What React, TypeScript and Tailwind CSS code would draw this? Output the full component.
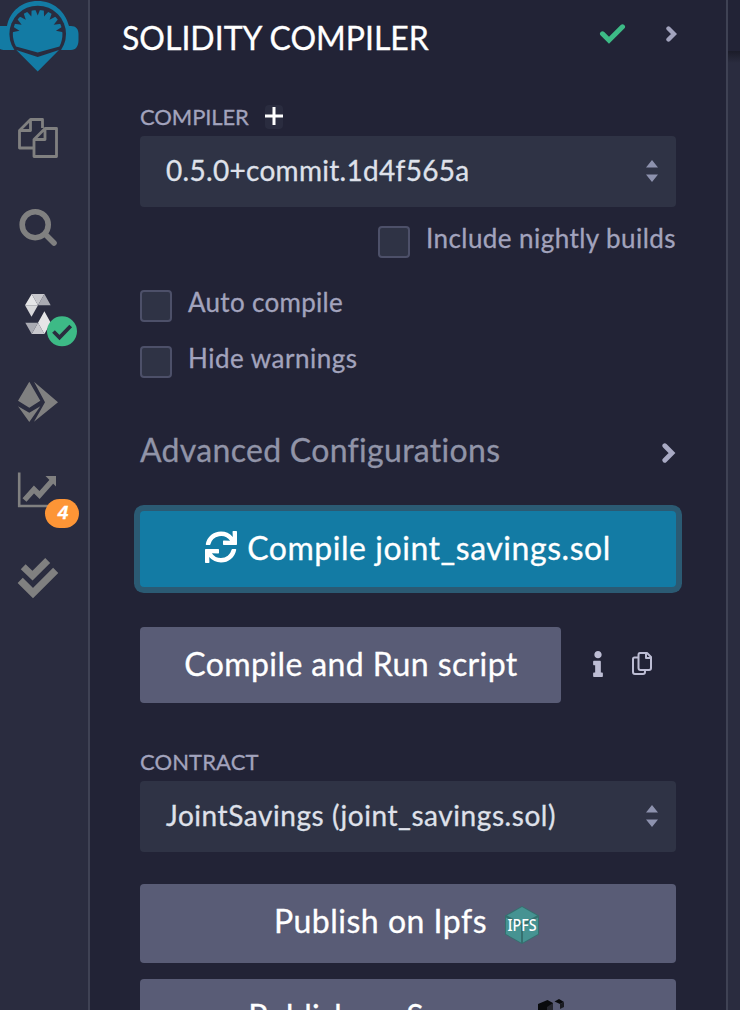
import type { ReactNode } from "react";
import { FaSync, FaInfo } from "react-icons/fa";

function Logo() {
  const teeth = [-80, -60, -40, -20, 0, 20, 40, 60, 80];
  return (
    <svg className="block h-[72px] w-[88px]" viewBox="0 0 88 72">
      <path fill="#137ba4" d="M-2 26H7C10 11 22 1 37.7 1S65 11 69 26H71C76 26 78.5 29 78.5 34V40C78.5 46 76 50 71 50H5C2 50 0 49 -2 48Z" />
      <circle cx="37.700" cy="34" r="28.300" fill="#2a2c3f" />
      <path fill="#137ba4" d="M16 46.500C7 29 18 10 37.700 10S68 29 59.500 46.500L37.700 52.500Z" />
      {teeth.map((a) => (
        <path key={a} fill="#2a2c3f" d="M34.900 8.500H40.500L37.700 15.500Z" transform={`rotate(${a} 37.7 34)`} />
      ))}
      <path fill="#137ba4" d="M16.300 50L37.700 57L59 50L37.700 71.500Z" />
    </svg>
  );
}

function NavItem({ children }: { children: ReactNode }) {
  return <div className="relative h-[88px] w-[88px]">{children}</div>;
}

function Sidebar() {
  return (
    <nav className="w-[90px] shrink-0 border-r-2 border-[#3f4254] bg-[#2a2c3f]">
      <div className="h-[94px]"><Logo /></div>
      <NavItem>
        <svg className="size-full" viewBox="0 94 88 88" fill="none" stroke="#808080" strokeWidth="2.800" strokeLinejoin="round">
          <path d="M33 148H19.500V130.500L30.500 119.500H42.500V128M30.500 119.500V130.500H19.500" />
          <path d="M34 156.500V139.500L45 128.500H56.500V156.500ZM45 128.500V139.500H34" />
        </svg>
      </NavItem>
      <NavItem>
        <svg className="size-full" viewBox="0 182 88 88" fill="none" stroke="#808080">
          <circle cx="35.200" cy="224.700" r="13" strokeWidth="5.600" />
          <path d="M45 234L54 243" strokeWidth="5.600" strokeLinecap="round" />
        </svg>
      </NavItem>
      <NavItem>
        <svg className="size-full" viewBox="0 270 88 88">
          <path fill="#e5e5e7" d="M31.700 294L38 305.300H25ZM44.400 311.300L50.700 322.700L44.400 334L38 322.700Z" />
          <path fill="#c8c8cd" d="M31.700 294H44.400L38 305.300ZM31.700 334H44.400L38 322.700Z" />
          <path fill="#a9aab2" d="M44.400 294L50.700 305.300H38ZM25.300 322.700H38L31.700 334Z" />
          <path fill="#d7d7da" d="M25 305.300H38L31.500 316.700Z" />
          <circle cx="62" cy="331.300" r="15" fill="#3dba86" />
          <path d="M53.500 331.500L59.500 337.500L70.700 326" fill="none" stroke="#2a2c3f" strokeWidth="3.800" />
        </svg>
      </NavItem>
      <NavItem>
        <svg className="size-full" viewBox="0 358 88 88" fill="#808080">
          <path d="M29.300 381.700L40.300 400.700L29.300 407.700L18 400.700ZM18 406.300L29.300 412.700L40.300 406.300L29.300 422ZM34 381.700L58 402.300L34 421.700L45 402.300Z" />
        </svg>
      </NavItem>
      <NavItem>
        <svg className="size-full" viewBox="0 446 88 88" fill="none" stroke="#808080">
          <path d="M19.200 472.500V506H57" strokeWidth="2.600" />
          <path d="M24.500 500L34 489.500L39.500 495L52 481" strokeWidth="5.400" />
          <path d="M45.500 476H56V486.500Z" fill="#808080" stroke="none" />
        </svg>
        <span className="absolute left-[45px] top-[53px] flex h-[29px] w-[34px] items-center justify-center rounded-full bg-[#fd9536] pb-[3px] pl-0.5 font-['Liberation_Sans'] text-[19px] font-bold italic leading-none text-white">4</span>
      </NavItem>
      <NavItem>
        <svg className="size-full" viewBox="0 534 88 88" fill="none" stroke="#808080">
          <path d="M23.200 566.800L32.500 575.700L47.700 560.500" strokeWidth="7" />
          <path d="M20.200 580.300L33 593L55.700 570.300" strokeWidth="7.300" />
        </svg>
      </NavItem>
    </nav>
  );
}

function Select({ children }: { children: ReactNode }) {
  return (
    <div className="flex h-[71px] shrink-0 items-center justify-between rounded bg-[#2f3345] pl-[26px] pr-[18px] text-[#dfe1ea]">
      {children}
      <svg className="mb-px h-6 w-3" viewBox="0 0 12 24" fill="#8d92ae">
        <path d="M0 8.500L6 1L12 8.500ZM0 15.500L6 23L12 15.500Z" />
      </svg>
    </div>
  );
}

function Check({ children }: { children: ReactNode }) {
  return (
    <label className="flex h-8 gap-4">
      <span className="size-8 rounded-[4px] border-2 border-[#4d5069] bg-[#2f3345]" />
      {children}
    </label>
  );
}

export default function App() {
  return (
    <div className="flex h-[1010px] w-[740px] overflow-hidden whitespace-nowrap bg-[#222336] font-[Lato,'Noto_Sans',sans-serif] text-[#a2a3bd] [-webkit-text-stroke:0.3px]">
      <Sidebar />
      <main className="flex w-[636px] shrink-0 flex-col overflow-hidden">
        <header className="flex h-[76px] shrink-0 items-center justify-between pl-8 pr-[49px]">
          <h1 className="text-[32px] text-white">SOLIDITY COMPILER</h1>
          <div className="flex items-center gap-10 pb-[9px]">
            <svg className="h-5 w-[27px]" viewBox="0 0 27 20" fill="none" stroke="#3dba86" strokeWidth="5" strokeLinecap="round">
              <path d="M3.500 9.800L10 16.200L23.500 2.800" />
            </svg>
            <svg className="h-4 w-[11px]" viewBox="0 0 11 16" fill="none" stroke="currentColor" strokeWidth="4.400" strokeLinecap="round">
              <path d="M2.500 2.500L8 8L2.500 13.500" />
            </svg>
          </div>
        </header>
        <div className="flex shrink-0 flex-col px-[50px] pt-[26px]">
          <div className="flex h-[34px] items-start gap-4">
            <span className="mt-0.5 text-[22px] leading-[26px] tracking-[-0.1px]">COMPILER</span>
            <span className="mt-[3px] flex h-6 w-[18px] items-center justify-center rounded bg-[#2a2c3f]">
              <svg className="mb-[3px] h-[18px] w-[18px]" viewBox="0 0 18 18" stroke="white" strokeWidth="3"><path d="M9 0V18M0 9H18" /></svg>
            </span>
          </div>
          <Select><span className="pb-[3px] text-[28px] tracking-[0.3px]">0.5.0+commit.1d4f565a</span></Select>
          <div className="mt-[19px] flex justify-end">
            <Check><span className="-mt-1 text-[26px] leading-8 tracking-[0.44px]">Include nightly builds</span></Check>
          </div>
          <div className="mt-8 flex flex-col gap-6">
            <Check><span className="-mt-1 text-[26px] leading-8 tracking-[0.3px]">Auto compile</span></Check>
            <Check><span className="-mt-1 text-[26px] leading-8 tracking-[0.5px]">Hide warnings</span></Check>
          </div>
          <div className="mt-[52px] flex h-10 items-center justify-between text-[#9194a8]">
            <span className="text-[32px] leading-10 tracking-[0.3px]">Advanced Configurations</span>
            <svg className="mt-1.5 h-5 w-[15px]" viewBox="0 0 15 20" fill="none" stroke="#a9aac4" strokeWidth="4.800" strokeLinecap="round">
              <path d="M3.800 2.800L11 10L3.800 17.200" />
            </svg>
          </div>
          <button className="mt-[41px] flex h-[76px] items-center justify-center gap-[10px] rounded bg-[#137ba4] text-white ring-[6px] ring-[#2b5a73]">
            <FaSync className="mb-1 size-8" />
            <span className="pb-[3px] text-[32px] tracking-[0.54px]">Compile joint_savings.sol</span>
          </button>
          <div className="mt-10 flex items-center">
            <button className="h-[76px] w-[421px] rounded bg-[#595c76] pb-0.5 pl-px text-[32px] tracking-[0.4px] text-white">Compile and Run script</button>
            <FaInfo className="mb-[3px] ml-6 size-[26px] text-[#bdbdd4]" />
            <svg className="mb-[3px] ml-[21px] h-[23px] w-5" viewBox="0 0 20 23" fill="none" stroke="#bdbdd4" strokeWidth="2" strokeLinejoin="round">
              <path d="M6.500 5.500H2.500Q1 5.500 1 7V20Q1 22 3 22H11Q13 22 13 20V18.500" />
              <path d="M8 1H15L19 5V16Q19 18 17 18H8.500Q6.500 18 6.500 16V3Q6.500 1 8 1ZM14 1V6H19" />
            </svg>
          </div>
          <span className="mt-[45px] h-[33px] text-[22px] leading-7 tracking-[0.1px]">CONTRACT</span>
          <Select><span className="pb-[3px] text-[28px] tracking-[0.56px]">JointSavings (joint_savings.sol)</span></Select>
          <button className="mt-8 flex h-[79px] items-center justify-center gap-[18px] rounded bg-[#595c76] pr-[3px] text-white">
            <span className="pb-[5px] text-[32px] tracking-[0.5px]">Publish on Ipfs</span>
            <svg className="mt-0.5 h-[38px] w-[34px]" viewBox="0 0 34 38">
              <path fill="#35706f" d="M17 0L34 9.500V28.500L17 38L0 28.500V9.500Z" />
              <path fill="#469392" d="M17 1L32 9.500L17 17.500L2 9.500ZM1 11.500L16 20V36.500L1 28ZM33 11.500L18 20V36.500L33 28Z" />
              <text x="17" y="25" textAnchor="middle" fill="white" fontFamily="Noto Sans" fontSize="15.500" fontWeight="500" textLength="29" lengthAdjust="spacingAndGlyphs">IPFS</text>
            </svg>
          </button>
          <button className="mt-4 flex h-[79px] items-center justify-center gap-[21px] rounded bg-[#595c76] pr-[3px] text-white">
            <span className="pb-[5px] text-[32px] tracking-[0.35px]">Publish on Swarm</span>
            <svg className="h-[40px] w-[40px]" viewBox="0 0 40 40">
              <path fill="#090a0d" d="M13 5L22.500 1L28 4V13L21 18L13 14Z" />
              <path fill="#25262f" d="M22 8L28 4V13L22 17Z" />
              <path fill="#090a0d" d="M29.500 2.500L34 0L39 3L35 5Z" />
              <path fill="#1b1c23" d="M35 5L39 3V8L35 10Z" />
              <path fill="#090a0d" d="M0 22L10 16L20 22V34L10 40L0 34ZM22 22L30 16L40 22V34L30 40L22 34Z" />
            </svg>
          </button>
        </div>
      </main>
      <aside className="w-[14px] shrink-0 border-l-2 border-[#3f4254] bg-[#2a2c3f]">
        <div className="h-[51px] bg-[#222336]" />
        <div className="h-3 bg-linear-to-b from-[#1b1c29] to-[#2a2c3f]" />
      </aside>
    </div>
  );
}
